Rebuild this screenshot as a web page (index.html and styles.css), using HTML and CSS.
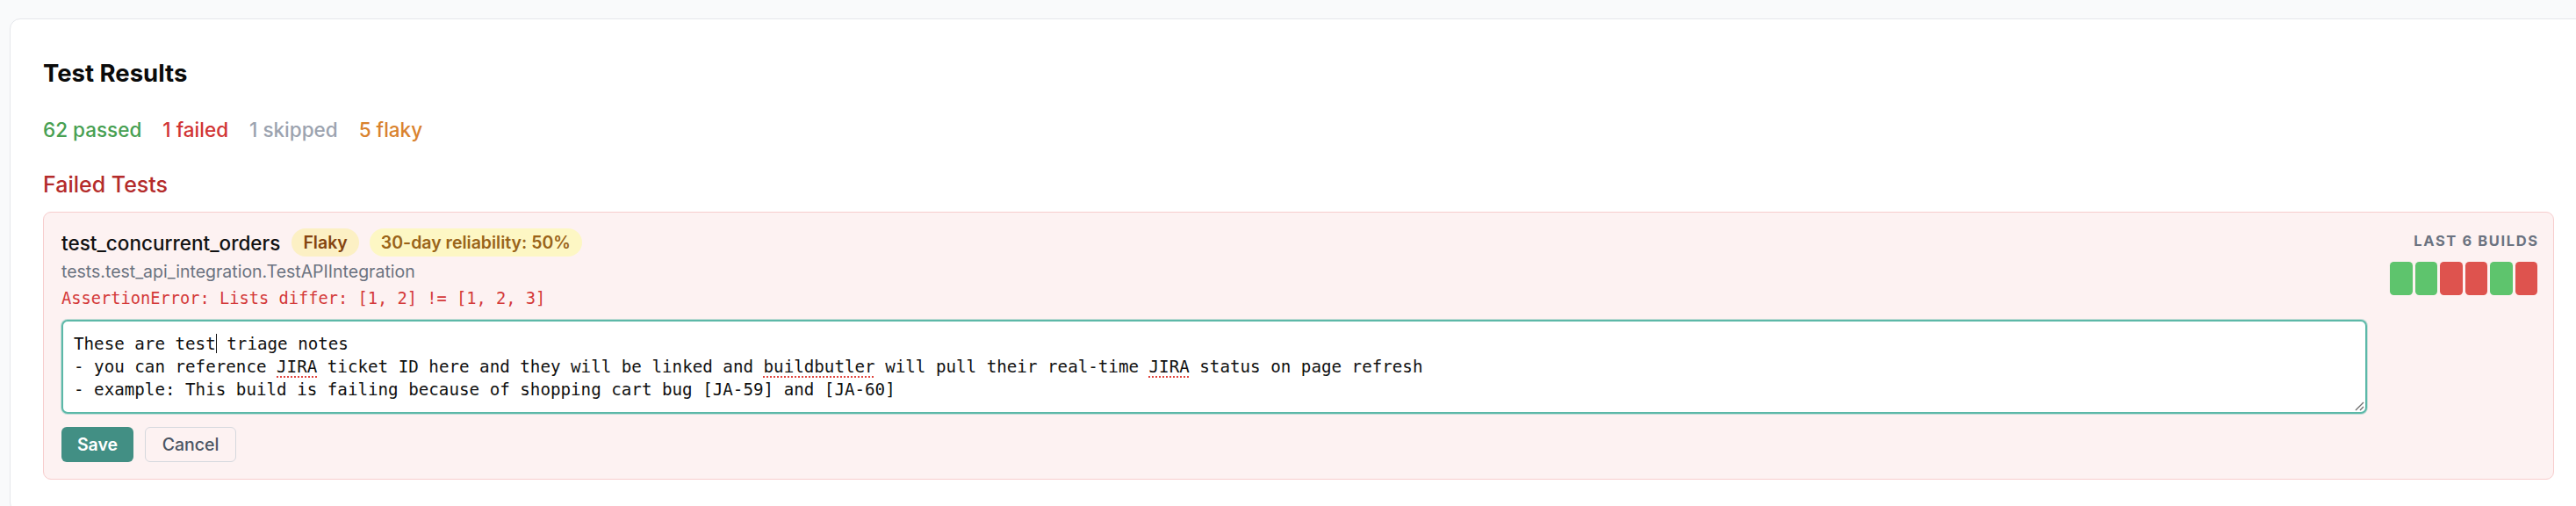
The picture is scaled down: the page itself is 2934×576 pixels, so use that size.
FILE: index.html
```html
<!DOCTYPE html>
<html lang="en">
<head>
<meta charset="utf-8">
<title>Test Results</title>
<link rel="stylesheet" href="styles.css">
</head>
<body>
<div class="panel">
  <h2 class="title">Test Results</h2>
  <div class="stats">
    <span class="stat passed">62 passed</span>
    <span class="stat failed">1 failed</span>
    <span class="stat skipped">1 skipped</span>
    <span class="stat flaky">5 flaky</span>
  </div>
  <h3 class="section">Failed Tests</h3>
  <div class="failure">
    <div class="main">
      <div class="head">
        <span class="name">test_concurrent_orders</span>
        <span class="badge badge-flaky">Flaky</span>
        <span class="badge badge-rel">30-day reliability: 50%</span>
      </div>
      <div class="classname">tests.test_api_integration.TestAPIIntegration</div>
      <div class="error">AssertionError: Lists differ: [1, 2] != [1, 2, 3]</div>
      <div class="notes">
        <div class="note-line">These are test<span class="caret"></span> triage notes</div>
        <div class="note-line">- you can reference <span class="spell">JIRA</span> ticket ID here and they will be linked and <span class="spell">buildbutler</span> will pull their real-time <span class="spell">JIRA</span> status on page refresh</div>
        <div class="note-line">- example: This build is failing because of shopping cart bug [JA-59] and [JA-60]</div>
        <svg class="grip" width="12" height="12" viewBox="0 0 12 12"><path d="M11 2 L2 11 M11 7 L7 11" stroke="#6b6b6b" stroke-width="1.3" fill="none"/></svg>
      </div>
      <div class="actions">
        <button class="btn btn-save">Save</button>
        <button class="btn btn-cancel">Cancel</button>
      </div>
    </div>
    <div class="builds">
      <div class="builds-label">LAST 6 BUILDS</div>
      <div class="builds-row">
        <span class="build pass"></span>
        <span class="build pass"></span>
        <span class="build fail"></span>
        <span class="build fail"></span>
        <span class="build pass"></span>
        <span class="build fail"></span>
      </div>
    </div>
  </div>
</div>
</body>
</html>
```
FILE: styles.css
```css
html, body {
  margin: 0;
  padding: 0;
}
body {
  background: #f9fafb;
  font-family: Inter, "Noto Sans", "Liberation Sans", sans-serif;
  overflow: hidden;
  height: 576px;
  padding: 21px 0 0 11px;
  box-sizing: border-box;
}
.panel {
  width: 2936px;
  box-sizing: border-box;
  background: #fff;
  border: 1px solid #e5e7eb;
  border-radius: 12px;
  padding: 43px 37px 37px 37px;
}
.title {
  margin: 0;
  font-size: 27.5px;
  line-height: 36px;
  font-weight: 700;
  color: #0b0b0b;
}
.stats {
  margin-top: 29px;
  display: flex;
  gap: 24px;
  font-size: 22.5px;
  line-height: 36px;
  font-weight: 500;
}
.passed { color: #47a052; }
.failed { color: #d13434; }
.skipped { color: #9ca3af; }
.flaky { color: #d9822e; }
.section {
  margin: 26px 0 0 0;
  font-size: 25px;
  line-height: 36px;
  font-weight: 500;
  color: #b42b2b;
}
.failure {
  margin-top: 13px;
  background: #fdf2f2;
  border: 1px solid #f7cdcd;
  border-radius: 9px;
  padding: 18px 18px 19px 20px;
  display: flex;
  gap: 24px;
}
.main {
  flex: 1;
  min-width: 0;
}
.head {
  display: flex;
  align-items: center;
  gap: 12px;
  height: 32px;
}
.name {
  font-size: 22.5px;
  font-weight: 500;
  color: #111;
  margin-right: 1px;
}
.badge {
  display: inline-flex;
  align-items: center;
  height: 32px;
  padding: 0 13px;
  border-radius: 16px;
  font-size: 19.5px;
  font-weight: 600;
}
.badge-flaky {
  background: #fcf0c4;
  color: #85440f;
}
.badge-rel {
  background: #fdf7c4;
  color: #9a6419;
}
.classname {
  margin-top: 3px;
  font-size: 19.5px;
  line-height: 28px;
  color: #6b7280;
}
.error {
  margin-top: 3px;
  font-family: "DejaVu Sans Mono", "Liberation Mono", monospace;
  font-size: 18.7px;
  line-height: 28px;
  color: #d43a3a;
}
.notes {
  position: relative;
  margin-top: 10px;
  height: 107px;
  box-sizing: border-box;
  background: #fff;
  border: 2px solid #5cb8a8;
  border-radius: 7px;
  padding: 13px 12px 0 12px;
  box-shadow: 0 0 0 1px rgba(92, 184, 168, 0.35);
}
.note-line {
  white-space: pre;
  font-family: "DejaVu Sans Mono", "Liberation Mono", monospace;
  font-size: 19.2px;
  line-height: 26px;
  height: 26px;
  color: #111;
}
.caret {
  display: inline-block;
  width: 0;
  height: 22px;
  border-left: 1.5px solid #111;
  vertical-align: -4px;
}
.spell {
  text-decoration: underline dotted #e0443e;
  text-decoration-thickness: 2px;
  text-underline-offset: 4px;
}
.grip {
  position: absolute;
  right: 1px;
  bottom: 1px;
}
.actions {
  margin-top: 15px;
  display: flex;
  gap: 13px;
}
.btn {
  height: 40px;
  box-sizing: border-box;
  border-radius: 6px;
  font-family: Inter, "Noto Sans", "Liberation Sans", sans-serif;
  font-size: 19.5px;
  cursor: pointer;
}
.btn-save {
  width: 82px;
  background: #428f84;
  color: #fff;
  border: none;
  font-weight: 600;
}
.btn-cancel {
  width: 104px;
  background: transparent;
  color: #4b5563;
  border: 1px solid #d5d8de;
  font-weight: 500;
}
.builds {
  width: 170px;
  display: flex;
  flex-direction: column;
  align-items: flex-end;
}
.builds-label {
  margin-top: 4px;
  font-size: 16.5px;
  line-height: 20px;
  font-weight: 700;
  letter-spacing: 1.6px;
  color: #6b7280;
  margin-right: -1.6px;
}
.builds-row {
  margin-top: 14px;
  display: flex;
  gap: 3px;
}
.build {
  width: 25.5px;
  height: 38px;
  border-radius: 4.5px;
}
.build.pass { background: #5ec46d; }
.build.fail { background: #de534e; }
```
